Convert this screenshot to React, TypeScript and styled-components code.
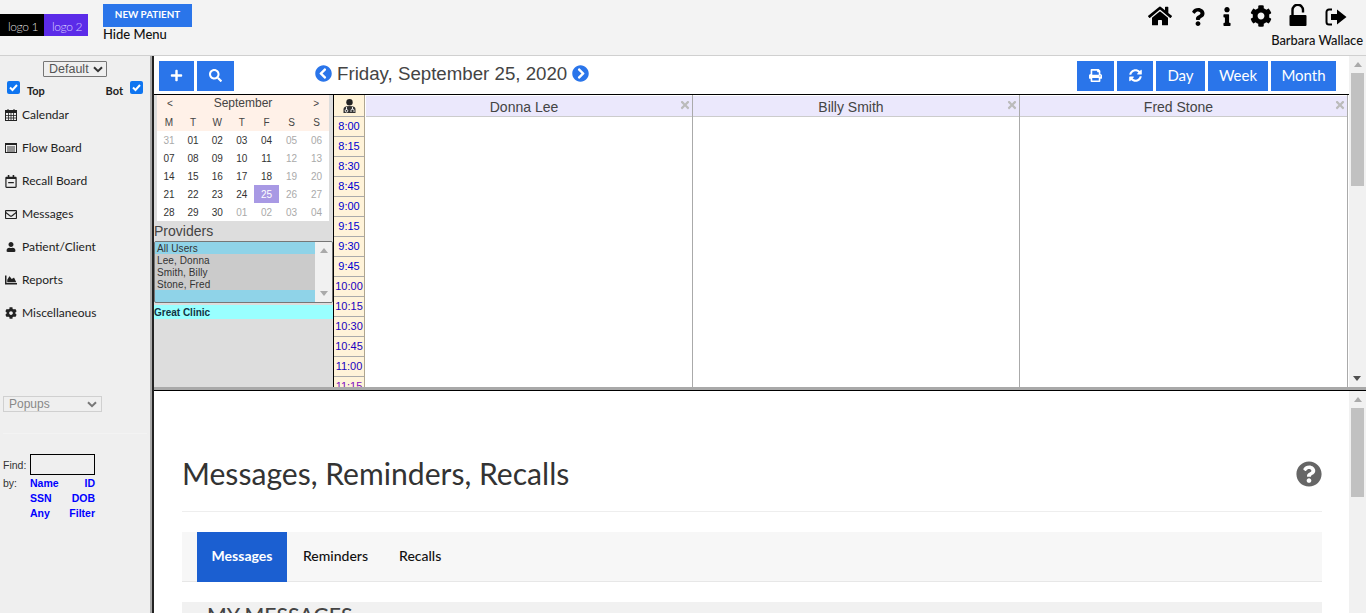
import React from "react";
import styled, { createGlobalStyle } from "styled-components";
import {
  FaHome, FaQuestion, FaInfo, FaCog, FaPlus, FaSearch, FaPrint, FaSyncAlt,
  FaChevronCircleLeft, FaChevronCircleRight, FaTimes, FaUser, FaChartArea, FaQuestionCircle,
  FaRegEnvelope, FaRegCalendarMinus,
} from "react-icons/fa";

const Global = createGlobalStyle`
  html, body { margin: 0; padding: 0; width: 100%; height: 100%; overflow: hidden; background: #fff; }
  * { box-sizing: border-box; }
`;
const Page = styled.div`width:1366px;height:613px;display:flex;flex-direction:column;overflow:hidden;font-family:Lato,sans-serif;`;
const Header = styled.header`height:56px;flex:none;background:#f3f3f3;border-bottom:1px solid #d0d0d0;display:flex;`;
const Logo = styled.div`margin-top:14px;height:22px;width:44px;padding:3px 0 0 2px;background:${p=>p.$bg};color:${p=>p.$fg};font-size:12px;font-weight:300;letter-spacing:-.4px;display:flex;align-items:center;justify-content:center;`;
const NewCol = styled.div`margin-left:15px;padding-top:4px;display:flex;flex-direction:column;`;
const NewBtn = styled.div`width:89px;height:23px;padding-bottom:3px;background:#2a75ea;color:#fff;font-size:9.8px;font-weight:700;display:flex;align-items:center;justify-content:center;`;
const HideMenu = styled.div`font-size:13px;font-weight:500;color:#111;line-height:15px;`;
const HeaderRight = styled.div`margin-left:auto;padding-right:3px;display:flex;flex-direction:column;align-items:flex-end;`;
const TopIcons = styled.div`display:flex;align-items:flex-end;height:28px;margin-bottom:5px;color:#000;padding-right:16px;`;
const TopIcon = styled.span`display:flex;justify-content:center;width:${p=>p.$w}px;margin-left:${p=>p.$m||0}px;margin-bottom:${p=>p.$b||0}px;`;
const UserName = styled.div`font-size:12.9px;font-weight:500;color:#111;line-height:15px;`;
const Main = styled.div`flex:1;display:flex;min-height:0;`;
const Side = styled.aside`width:150px;flex:none;background:#efefef;display:flex;flex-direction:column;`;
const DefaultSel = styled.div`margin:5px 0 0 43px;width:64px;height:16px;border:1px solid #767676;border-radius:1px;background:#efefef;font:12.5px "Liberation Sans",sans-serif;color:#555;display:flex;align-items:center;justify-content:space-between;padding:0 3px 0 5px;`;
const Chev = styled.svg`width:10px;height:7px;flex:none;`;
const CheckRow = styled.div`display:flex;justify-content:space-between;margin-top:4px;height:20px;padding:0 7px;align-items:flex-start;`;
const CheckGroup = styled.div`display:flex;align-items:flex-start;gap:7px;`;
const CheckLabel = styled.span`font-size:11px;font-weight:700;color:#222;line-height:14px;padding-top:3px;`;
const CheckBox = styled.span`width:13px;height:13px;background:#0f75f0;border-radius:2px;display:flex;align-items:center;justify-content:center;`;
const Menu = styled.nav`display:flex;flex-direction:column;margin-top:2px;`;
const MenuItem = styled.div`height:33px;padding-left:5px;display:flex;align-items:center;gap:5px;font-size:12px;color:#222;line-height:14px;padding-bottom:9px;`;
const MenuIcon = styled.span`width:12px;display:flex;justify-content:center;color:#222;`;
const PopSel = styled.div`margin:62px 0 0 3px;width:99px;height:16px;border:1px solid #d0d0d0;background:#efefef;font:12px "Liberation Sans",sans-serif;color:#888;display:flex;align-items:center;justify-content:space-between;padding:0 4px 0 5px;`;
const FaintRule = styled.hr`margin:21px 3px 0;border:0;border-top:1px solid #f3f3f3;height:0;`;
const FindWrap = styled.div`margin-top:20px;padding-left:3px;font:10.5px "Liberation Sans",sans-serif;color:#333;`;
const FindRow = styled.div`display:flex;align-items:center;gap:4px;`;
const FindInput = styled.div`width:65px;height:21px;border:1px solid #000;background:#efefef;`;
const ByGrid = styled.div`display:grid;grid-template-columns:27px 34px 31px;grid-auto-rows:15px;margin-top:0;align-items:center;`;
const ByLink = styled.span`color:#00f;font-weight:700;font-size:10.5px;text-align:${p=>p.$r?"right":"left"};white-space:nowrap;`;
const Frames = styled.div`flex:1;min-width:0;display:flex;flex-direction:column;border-left:2px solid #a9a9a9;`;
const FramesInner = styled.div`flex:1;min-height:0;display:flex;flex-direction:column;border-left:2px solid #222;`;
const TopFrame = styled.section`height:331px;flex:none;display:flex;background:#fff;`;
const TopContent = styled.div`flex:1;min-width:0;display:flex;flex-direction:column;`;
const Toolbar = styled.div`height:39px;flex:none;display:flex;align-items:flex-start;padding:5px 13px 0 5px;border-bottom:1px solid #000;`;
const Btn = styled.div`height:30px;width:${p=>p.$w}px;margin-right:${p=>p.$m??3}px;padding-bottom:2px;background:#2a75ea;color:#fff;font-size:15px;display:flex;align-items:center;justify-content:center;flex:none;`;
const DateBar = styled.div`margin-left:78px;height:25px;display:flex;align-items:center;gap:5px;font:18.7px "Liberation Sans",sans-serif;color:#444;`;
const Spacer = styled.div`flex:1;`;
const Sched = styled.div`flex:1;min-height:0;display:flex;`;
const MiniPane = styled.div`width:179px;flex:none;background:#ddd;display:flex;flex-direction:column;`;
const Cal = styled.div`margin:0 4px 0 3px;background:#fff;font:10px "Liberation Sans",sans-serif;`;
const CalHead = styled.div`background:#fff1e8;color:#444;`;
const CalTitle = styled.div`height:18px;padding:0 10px 2px;display:flex;justify-content:space-between;align-items:center;font-size:12px;`;
const CalSmall = styled.span`font-size:10px;`;
const Grid7 = styled.div`display:grid;grid-template-columns:24px 24px 24.5px 24.5px 25px 25px 25px;`;
const Cell = styled.div`height:18px;display:flex;align-items:center;justify-content:center;color:${p=>p.$c};background:${p=>p.$bg||"transparent"};`;
const ProvLabel = styled.div`font:14px "Liberation Sans",sans-serif;color:#444;height:20px;line-height:20px;`;
const ProvList = styled.div`height:62px;border:1px solid #767676;border-radius:2px;background:#8fd3e8;display:flex;font:10px/12px "Liberation Sans",sans-serif;letter-spacing:.1px;color:#333;overflow:hidden;`;
const ProvRows = styled.div`flex:1;display:flex;flex-direction:column;`;
const ProvRow = styled.div`height:12px;padding:1px 0 0 2px;background:${p=>p.$sel?"#8fd3e8":"#cbcbcb"};`;
const ProvScroll = styled.div`width:17px;background:#f1f1f1;display:flex;flex-direction:column;justify-content:space-between;align-items:center;padding:6px 0;`;
const Tri = styled.span`width:0;height:0;border-left:4px solid transparent;border-right:4px solid transparent;${p=>p.$up?`border-bottom:5px solid ${p.$c||"#aaa"};`:`border-top:5px solid ${p.$c||"#aaa"};`}`;
const ClinicBar = styled.div`margin-top:2px;height:14px;background:#9ff;font:700 10px/15px "Liberation Sans",sans-serif;color:#134;`;
const TimeCol = styled.div`width:32px;flex:none;border-left:1px solid #000;border-right:1px solid #b0a690;background:#fff3d9;overflow:hidden;`;
const TimeHead = styled.div`height:22px;display:flex;align-items:flex-end;justify-content:center;padding-bottom:3px;border-bottom:1px solid #aaa;`;
const TimeSlot = styled.div`height:20px;border-bottom:1px solid #aaa;font:11px/19px "Liberation Sans",sans-serif;color:${p=>p.$c};text-align:center;`;
const Prov = styled.div`width:${p=>p.$w}px;flex:none;border-right:1px solid #aaa;padding-left:${p=>p.$pl||0}px;padding-top:1px;`;
const ProvHead = styled.div`height:21px;padding-right:10px;background:#ebe8fc;border-bottom:1px solid #ccc;font:14px/22px "Liberation Sans",sans-serif;color:#444;text-align:center;position:relative;`;
const CloseX = styled.span`position:absolute;right:1px;top:3px;color:#bbb;display:flex;`;
const Scroll = styled.div`width:17px;flex:none;background:#f1f1f1;display:flex;flex-direction:column;align-items:center;padding-top:6px;position:relative;`;
const Thumb = styled.div`width:13px;height:${p=>p.$h}px;margin-top:${p=>p.$t}px;background:#c1c1c1;`;
const BottomArrow = styled.span`position:absolute;bottom:6px;left:4px;display:flex;`;
const SplitBar = styled.div`height:4px;flex:none;background:#a9a9a9;border-bottom:1px solid #000;`;
const BottomFrame = styled.section`flex:1;min-height:0;display:flex;background:#fff;overflow:hidden;`;
const BottomContent = styled.div`flex:1;min-width:0;padding:0 27px 0 28px;`;
const TitleRow = styled.div`height:121px;padding-top:64px;border-bottom:1px solid #eee;display:flex;justify-content:space-between;`;
const Title = styled.h1`margin:0;font-size:30.1px;font-weight:400;color:#333;line-height:36px;`;
const HelpIcon = styled.span`color:#666;display:flex;padding-top:6px;`;
const Tabs = styled.div`margin-top:20px;height:50px;background:#f7f7f7;border-bottom:1px solid #e7e7e7;display:flex;padding-left:15px;`;
const Tab = styled.div`height:50px;padding:${p=>p.$a?"0 0 3px":"0 15px 3px 16px"};width:${p=>p.$a?"90px":"auto"};display:flex;align-items:center;justify-content:center;font-size:14px;font-weight:${p=>p.$a?700:500};background:${p=>p.$a?"#1b5fd1":"transparent"};color:${p=>p.$a?"#fff":"#111"};`;
const Section = styled.div`margin-top:20px;height:40px;background:#f1f1f1;padding:1px 0 0 25px;font-size:21.2px;font-weight:500;color:#444;line-height:24px;text-transform:uppercase;`;

const ChevIcon = ({c="#333"}:{c?:string}) => <Chev viewBox="0 0 10 7"><path d="M1 1.2l4 4 4-4" fill="none" stroke={c} strokeWidth="2"/></Chev>;
const Check = () => <svg width="11" height="11" viewBox="0 0 11 11"><path d="M2 5.500l2.500 2.500L9 3" fill="none" stroke="#fff" strokeWidth="2"/></svg>;
const SignOut = () => <svg width="22" height="20" viewBox="0 0 22 20"><path d="M7 2.500H4A2.500 2.500 0 0 0 1.500 5v10A2.500 2.500 0 0 0 4 17.500h3" fill="none" stroke="#000" strokeWidth="2"/><path d="M6 7h6V2.500l9.500 7.500-9.500 7.500V13H6z" fill="#000"/></svg>;
const OpenLock = () => <svg width="18" height="22" viewBox="0 0 18 22"><path d="M3.500 11.500V6a5.250 5.250 0 0 1 10.500 0v2.500" fill="none" stroke="#000" strokeWidth="2.400"/><rect x=".5" y="11" width="17" height="11" rx="1" fill="#000"/></svg>;
const CalGrid = () => <svg width="12" height="12" viewBox="0 0 12 12"><rect x=".5" y="1.500" width="11" height="10" fill="none" stroke="#222"/><rect x="0" y="1" width="12" height="3" fill="#222"/><path d="M3 0v3M9 0v3" stroke="#222"/><path d="M3.500 4v7M6 4v7M8.500 4v7M1 6.500h10M1 9h10" stroke="#222" strokeWidth=".8"/></svg>;
const FlowIcon = () => <svg width="12" height="10" viewBox="0 0 12 10"><rect x=".5" y=".5" width="11" height="9" fill="none" stroke="#222"/><rect x="0" y="0" width="12" height="2" fill="#222"/><path d="M2 4h8M2 6h8M2 8h8" stroke="#222" strokeWidth=".9"/></svg>;
const DoctorIcon = () => <svg width="13" height="14" viewBox="0 0 13 14"><circle cx="6.500" cy="3.200" r="3.200" fill="#222"/><path d="M.500 14V10q0-3 6-3t6 3v4z" fill="#333"/><path d="M3.500 8v3M9.500 8v2.500" stroke="#fff" strokeWidth=".9"/><circle cx="3.500" cy="11.800" r="1.300" fill="none" stroke="#fff" strokeWidth=".9"/><path d="M8 13v-1.500a1.500 1.500 0 0 1 3 0V13" fill="none" stroke="#fff" strokeWidth=".9"/></svg>;

const rows = [
  ["31","01","02","03","04","05","06"],
  ["07","08","09","10","11","12","13"],
  ["14","15","16","17","18","19","20"],
  ["21","22","23","24","25","26","27"],
  ["28","29","30","01","02","03","04"],
];
const times = ["8:00","8:15","8:30","8:45","9:00","9:15","9:30","9:45","10:00","10:15","10:30","10:45","11:00","11:15"];
const menu = [
  ["Calendar", <CalGrid/>],
  ["Flow Board", <FlowIcon/>],
  ["Recall Board", <FaRegCalendarMinus size={13}/>],
  ["Messages", <FaRegEnvelope size={13}/>],
  ["Patient/Client", <FaUser size={10}/>],
  ["Reports", <FaChartArea size={14}/>],
  ["Miscellaneous", <FaCog size={12}/>],
] as const;
const dayColor = (r:number,c:number) => {
  if (r===3&&c===4) return "#fff";
  const faded = (r===0&&c===0)||(r===4&&c>=3)||c>=5;
  return faded ? "#aaa" : "#333";
};

export default function App() {
  return (
    <Page>
      <Global/>
      <Header>
        <Logo $bg="#000" $fg="#ddd">logo 1</Logo>
        <Logo $bg="#5b2be8" $fg="#d8d0ff">logo 2</Logo>
        <NewCol>
          <NewBtn>NEW PATIENT</NewBtn>
          <HideMenu>Hide Menu</HideMenu>
        </NewCol>
        <HeaderRight>
          <TopIcons>
            <TopIcon $w={24}><FaHome size={24}/></TopIcon>
            <TopIcon $w={16} $m={18} $b={2}><FaQuestion size={18}/></TopIcon>
            <TopIcon $w={12} $m={15} $b={2}><FaInfo size={19}/></TopIcon>
            <TopIcon $w={22} $m={17} $b={1}><FaCog size={22}/></TopIcon>
            <TopIcon $w={18} $m={17} $b={2}><OpenLock/></TopIcon>
            <TopIcon $w={22} $m={18} $b={1}><SignOut/></TopIcon>
          </TopIcons>
          <UserName>Barbara Wallace</UserName>
        </HeaderRight>
      </Header>
      <Main>
        <Side>
          <DefaultSel>Default<ChevIcon/></DefaultSel>
          <CheckRow>
            <CheckGroup><CheckBox><Check/></CheckBox><CheckLabel>Top</CheckLabel></CheckGroup>
            <CheckGroup><CheckLabel>Bot</CheckLabel><CheckBox><Check/></CheckBox></CheckGroup>
          </CheckRow>
          <Menu>
            {menu.map(([t,i]) => <MenuItem key={t}><MenuIcon>{i}</MenuIcon>{t}</MenuItem>)}
          </Menu>
          <PopSel>Popups<ChevIcon c="#777"/></PopSel>
          <FaintRule/>
          <FindWrap>
            <FindRow>Find:<FindInput/></FindRow>
            <ByGrid>
              <span>by:</span><ByLink>Name</ByLink><ByLink $r>ID</ByLink>
              <span/><ByLink>SSN</ByLink><ByLink $r>DOB</ByLink>
              <span/><ByLink>Any</ByLink><ByLink $r>Filter</ByLink>
            </ByGrid>
          </FindWrap>
        </Side>
        <Frames>
          <FramesInner>
            <TopFrame>
              <TopContent>
                <Toolbar>
                  <Btn $w={35}><FaPlus size={13}/></Btn>
                  <Btn $w={37}><FaSearch size={13}/></Btn>
                  <DateBar><FaChevronCircleLeft size={17} color="#2a75ea"/>Friday, September 25, 2020<FaChevronCircleRight size={17} color="#2a75ea"/></DateBar>
                  <Spacer/>
                  <Btn $w={37}><FaPrint size={13}/></Btn>
                  <Btn $w={36}><FaSyncAlt size={13}/></Btn>
                  <Btn $w={49}>Day</Btn>
                  <Btn $w={60}>Week</Btn>
                  <Btn $w={65} $m={0}>Month</Btn>
                </Toolbar>
                <Sched>
                  <MiniPane>
                    <Cal>
                      <CalHead>
                        <CalTitle><CalSmall>&lt;</CalSmall>September<CalSmall>&gt;</CalSmall></CalTitle>
                        <Grid7>{["M","T","W","T","F","S","S"].map((d,i)=><Cell key={i} $c="#444">{d}</Cell>)}</Grid7>
                      </CalHead>
                      <Grid7>
                        {rows.map((r,ri)=>r.map((d,ci)=><Cell key={ri+"-"+ci} $c={dayColor(ri,ci)} $bg={ri===3&&ci===4?"#a899e4":undefined}>{d}</Cell>))}
                      </Grid7>
                    </Cal>
                    <ProvLabel>Providers</ProvLabel>
                    <ProvList>
                      <ProvRows>
                        <ProvRow $sel>All Users</ProvRow>
                        <ProvRow>Lee, Donna</ProvRow>
                        <ProvRow>Smith, Billy</ProvRow>
                        <ProvRow>Stone, Fred</ProvRow>
                      </ProvRows>
                      <ProvScroll><Tri $up/><Tri/></ProvScroll>
                    </ProvList>
                    <ClinicBar>Great Clinic</ClinicBar>
                  </MiniPane>
                  <TimeCol>
                    <TimeHead><DoctorIcon/></TimeHead>
                    {times.map((t,i)=><TimeSlot key={t} $c={i<8?"#0000d0":i<13?"#2000c0":"#8010c0"}>{t}</TimeSlot>)}
                  </TimeCol>
                  <Prov $w={328} $pl={1}><ProvHead>Donna Lee<CloseX><FaTimes size={12}/></CloseX></ProvHead></Prov>
                  <Prov $w={327}><ProvHead>Billy Smith<CloseX><FaTimes size={12}/></CloseX></ProvHead></Prov>
                  <Prov $w={328}><ProvHead>Fred Stone<CloseX><FaTimes size={12}/></CloseX></ProvHead></Prov>
                </Sched>
              </TopContent>
              <Scroll>
                <Tri $up/>
                <Thumb $h={113} $t={6}/>
                <BottomArrow><Tri $c="#505050"/></BottomArrow>
              </Scroll>
            </TopFrame>
            <SplitBar/>
            <BottomFrame>
              <BottomContent>
                <TitleRow>
                  <Title>Messages, Reminders, Recalls</Title>
                  <HelpIcon><FaQuestionCircle size={26}/></HelpIcon>
                </TitleRow>
                <Tabs>
                  <Tab $a>Messages</Tab>
                  <Tab>Reminders</Tab>
                  <Tab>Recalls</Tab>
                </Tabs>
                <Section>My Messages</Section>
              </BottomContent>
              <Scroll>
                <Tri $up/>
                <Thumb $h={89} $t={6}/>
              </Scroll>
            </BottomFrame>
          </FramesInner>
        </Frames>
      </Main>
    </Page>
  );
}
